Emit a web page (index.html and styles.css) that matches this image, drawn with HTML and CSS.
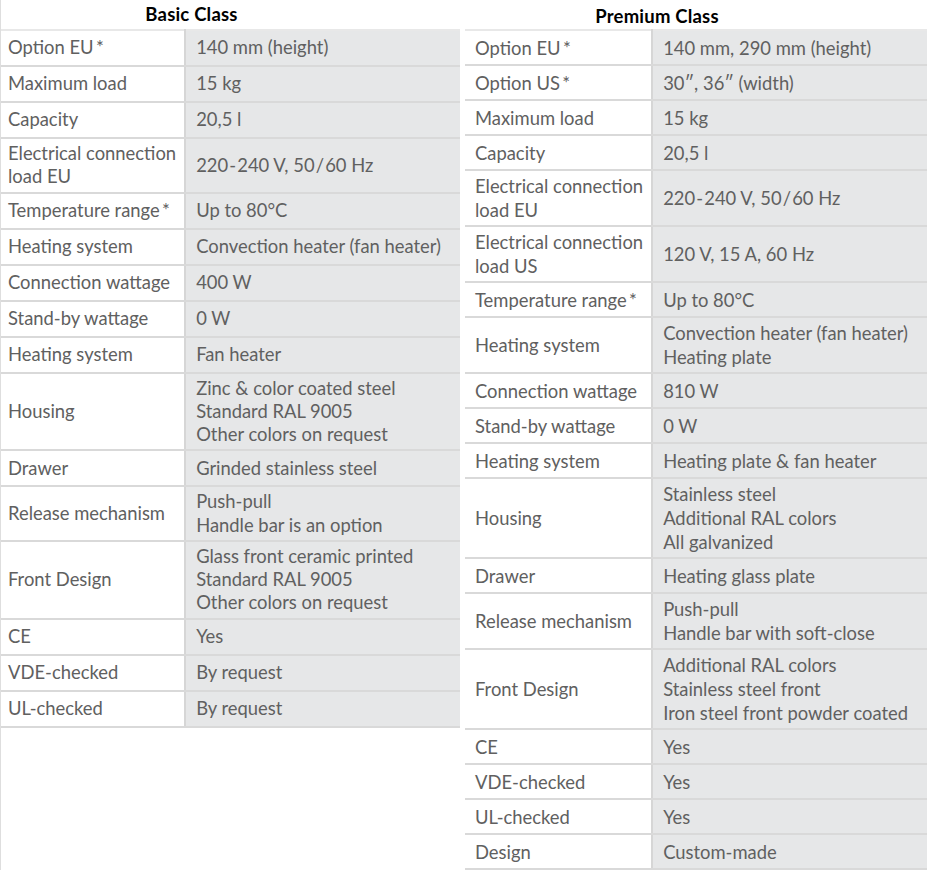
FILE: index.html
```html
<!DOCTYPE html>
<html>
<head>
<meta charset="utf-8">
<link rel="stylesheet" href="styles.css">
</head>
<body>
<div class="page">
  <section class="col col-basic">
    <h2 class="title">Basic Class</h2>
    <table class="spec">
      <tr><td class="k">Option EU&#8201;*</td><td class="v">140 mm (height)</td></tr>
      <tr><td class="k">Maximum load</td><td class="v">15 kg</td></tr>
      <tr><td class="k">Capacity</td><td class="v">20,5 l</td></tr>
      <tr><td class="k">Electrical connection<br>load EU</td><td class="v">220&#8202;-&#8202;240 V, 50&#8202;/&#8202;60 Hz</td></tr>
      <tr><td class="k">Temperature range&#8201;*</td><td class="v">Up to 80°C</td></tr>
      <tr><td class="k">Heating system</td><td class="v">Convection heater (fan heater)</td></tr>
      <tr><td class="k">Connection wattage</td><td class="v">400 W</td></tr>
      <tr><td class="k">Stand-by wattage</td><td class="v">0 W</td></tr>
      <tr><td class="k">Heating system</td><td class="v">Fan heater</td></tr>
      <tr><td class="k">Housing</td><td class="v">Zinc &amp; color coated steel<br>Standard RAL 9005<br>Other colors on request</td></tr>
      <tr><td class="k">Drawer</td><td class="v">Grinded stainless steel</td></tr>
      <tr><td class="k">Release mechanism</td><td class="v">Push-pull<br>Handle bar is an option</td></tr>
      <tr><td class="k">Front Design</td><td class="v">Glass front ceramic printed<br>Standard RAL 9005<br>Other colors on request</td></tr>
      <tr><td class="k">CE</td><td class="v">Yes</td></tr>
      <tr><td class="k">VDE-checked</td><td class="v">By request</td></tr>
      <tr><td class="k">UL-checked</td><td class="v">By request</td></tr>
    </table>
  </section>
  <section class="col col-premium">
    <h2 class="title">Premium Class</h2>
    <table class="spec">
      <tr><td class="k">Option EU&#8201;*</td><td class="v">140 mm, 290 mm (height)</td></tr>
      <tr><td class="k">Option US&#8201;*</td><td class="v">30″, 36″ (width)</td></tr>
      <tr><td class="k">Maximum load</td><td class="v">15 kg</td></tr>
      <tr><td class="k">Capacity</td><td class="v">20,5 l</td></tr>
      <tr><td class="k">Electrical connection<br>load EU</td><td class="v">220&#8202;-&#8202;240 V, 50&#8202;/&#8202;60 Hz</td></tr>
      <tr><td class="k">Electrical connection<br>load US</td><td class="v">120 V, 15 A, 60 Hz</td></tr>
      <tr><td class="k">Temperature range&#8201;*</td><td class="v">Up to 80°C</td></tr>
      <tr><td class="k">Heating system</td><td class="v">Convection heater (fan heater)<br>Heating plate</td></tr>
      <tr><td class="k">Connection wattage</td><td class="v">810 W</td></tr>
      <tr><td class="k">Stand-by wattage</td><td class="v">0 W</td></tr>
      <tr><td class="k">Heating system</td><td class="v">Heating plate &amp; fan heater</td></tr>
      <tr><td class="k">Housing</td><td class="v">Stainless steel<br>Additional RAL colors<br>All galvanized</td></tr>
      <tr><td class="k">Drawer</td><td class="v">Heating glass plate</td></tr>
      <tr><td class="k">Release mechanism</td><td class="v">Push-pull<br>Handle bar with soft-close</td></tr>
      <tr><td class="k">Front Design</td><td class="v">Additional RAL colors<br>Stainless steel front<br>Iron steel front powder coated</td></tr>
      <tr><td class="k">CE</td><td class="v">Yes</td></tr>
      <tr><td class="k">VDE-checked</td><td class="v">Yes</td></tr>
      <tr><td class="k">UL-checked</td><td class="v">Yes</td></tr>
      <tr><td class="k">Design</td><td class="v">Custom-made</td></tr>
    </table>
  </section>
</div>
</body>
</html>
```

FILE: styles.css
```css
html, body {
  margin: 0;
  padding: 0;
  background: #ffffff;
}
body {
  font-family: Lato, "Open Sans", "Liberation Sans", sans-serif;
  color: #606060;
  overflow: hidden;
}
.page {
  display: flex;
  gap: 5px;
  height: 870px;
}
.col {
  display: flex;
  flex-direction: column;
}
.col-basic {
  width: 460px;
  border-left: 1px solid #dedede;
  box-sizing: border-box;
}
.col-premium {
  width: 462px;
}
.title {
  margin: 0;
  height: 29px;
  box-sizing: border-box;
  padding-right: 78px;
  text-align: center;
  font-size: 18.5px;
  font-weight: 700;
  letter-spacing: 0.2px;
  color: #000;
  line-height: 28px;
}
.col-premium .title {
  padding-top: 2px;
}
.spec {
  width: 100%;
  border-collapse: collapse;
  border-top: 2px solid #e8e8e8;
}
.spec td {
  font-size: 18.4px;
  line-height: 23.25px;
  padding: 3px 8px;
  vertical-align: middle;
  border-bottom: 2px solid #d9d9d9;
  box-sizing: border-box;
}
.col-basic .spec td { height: 36px; }
.col-premium .spec td { height: 35px; line-height: 24px; }
.spec .k {
  background: #ffffff;
  white-space: nowrap;
}
.col-basic .spec .k { width: 184px; padding-left: 7px; }
.col-premium .spec .k { width: 187px; padding-left: 10px; }
.spec .v {
  background: #e6e7e8;
  border-left: 2px solid #d6d6d6;
  padding-left: 10px;
  white-space: nowrap;
}
```
